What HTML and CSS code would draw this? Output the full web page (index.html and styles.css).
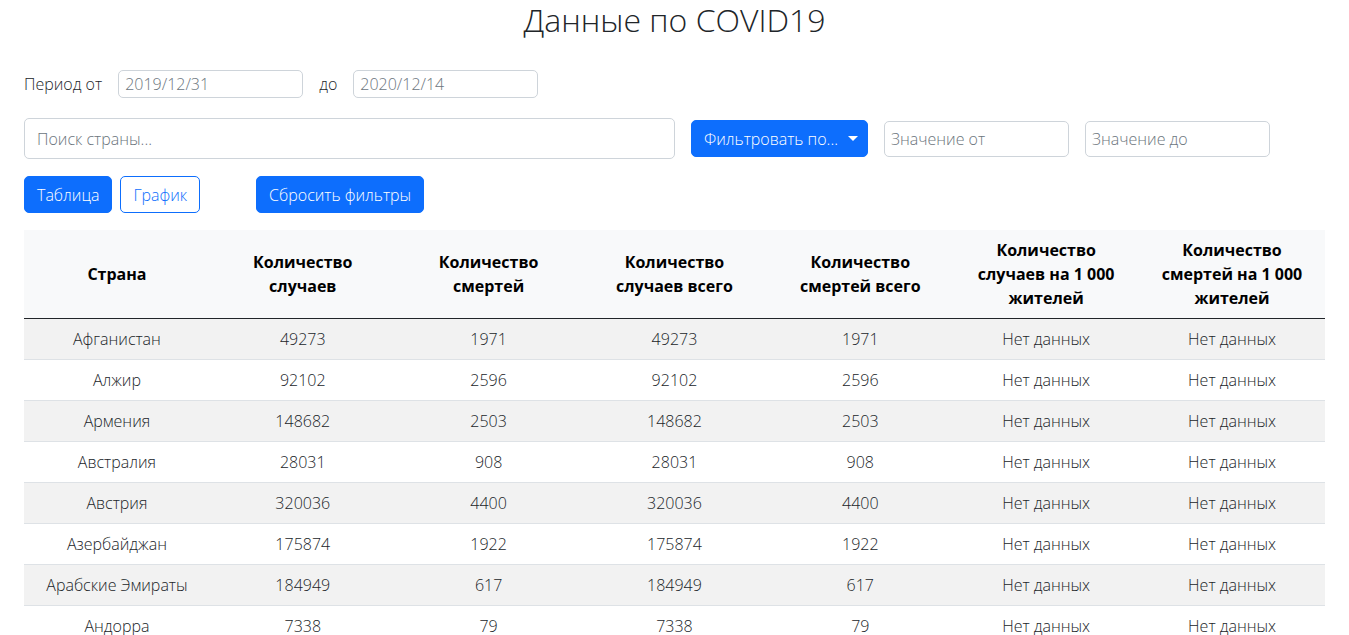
FILE: index.html
```html
<!DOCTYPE html>
<html lang="ru">
<head>
<meta charset="utf-8">
<title>Данные по COVID19</title>
<link rel="stylesheet" href="styles.css">
</head>
<body>
<div class="page">
  <h1 class="title">Данные по COVID19</h1>
  <div class="period">
    <span class="label">Период от</span>
    <input class="input input-sm" type="text" placeholder="2019/12/31">
    <span class="label">до</span>
    <input class="input input-sm" type="text" placeholder="2020/12/14">
  </div>
  <div class="filters">
    <input class="input input-lg search" type="text" placeholder="Поиск страны...">
    <button class="btn btn-primary dropdown">Фильтровать по...<span class="caret"></span></button>
    <input class="input input-md value" type="text" placeholder="Значение от">
    <input class="input input-md value" type="text" placeholder="Значение до">
  </div>
  <div class="actions">
    <button class="btn btn-primary">Таблица</button>
    <button class="btn btn-outline">График</button>
    <button class="btn btn-primary reset">Сбросить фильтры</button>
  </div>
  <table class="data">
    <thead>
      <tr>
        <th>Страна</th>
        <th>Количество случаев</th>
        <th>Количество смертей</th>
        <th>Количество случаев всего</th>
        <th>Количество смертей всего</th>
        <th>Количество случаев на 1&nbsp;000 жителей</th>
        <th>Количество смертей на 1&nbsp;000 жителей</th>
      </tr>
    </thead>
    <tbody>
      <tr><td>Афганистан</td><td>49273</td><td>1971</td><td>49273</td><td>1971</td><td>Нет данных</td><td>Нет данных</td></tr>
      <tr><td>Алжир</td><td>92102</td><td>2596</td><td>92102</td><td>2596</td><td>Нет данных</td><td>Нет данных</td></tr>
      <tr><td>Армения</td><td>148682</td><td>2503</td><td>148682</td><td>2503</td><td>Нет данных</td><td>Нет данных</td></tr>
      <tr><td>Австралия</td><td>28031</td><td>908</td><td>28031</td><td>908</td><td>Нет данных</td><td>Нет данных</td></tr>
      <tr><td>Австрия</td><td>320036</td><td>4400</td><td>320036</td><td>4400</td><td>Нет данных</td><td>Нет данных</td></tr>
      <tr><td>Азербайджан</td><td>175874</td><td>1922</td><td>175874</td><td>1922</td><td>Нет данных</td><td>Нет данных</td></tr>
      <tr><td>Арабские Эмираты</td><td>184949</td><td>617</td><td>184949</td><td>617</td><td>Нет данных</td><td>Нет данных</td></tr>
      <tr><td>Андорра</td><td>7338</td><td>79</td><td>7338</td><td>79</td><td>Нет данных</td><td>Нет данных</td></tr>
    </tbody>
  </table>
</div>
</body>
</html>
```
FILE: styles.css
```css
* { box-sizing: border-box; }
body {
  margin: 0;
  font-family: "Open Sans", "Liberation Sans", sans-serif;
  font-weight: 300;
  font-size: 16px;
  line-height: 24px;
  color: #212529;
  background: #fff;
}
.page { padding: 0 24px; }
.title {
  margin: 0;
  padding-top: 0;
  text-align: center;
  font-size: 32px;
  font-weight: 300;
  line-height: 40px;
  color: #212529;
}
.period {
  display: flex;
  align-items: center;
  gap: 16px;
  margin-top: 30px;
}
.label { font-size: 16px; }
.input {
  font-family: inherit;
  font-weight: 300;
  color: #212529;
  border: 1px solid #ced4da;
  border-radius: 5px;
  background: #fff;
  outline: none;
}
.input::placeholder { color: #6c757d; opacity: 1; }
.input-sm { width: 185px; height: 28px; padding: 0 6px; font-size: 16px; }
.input-lg { height: 41px; padding: 0 12px; font-size: 16px; }
.input-md { height: 36px; padding: 0 6px; font-size: 16px; }
.filters {
  display: flex;
  align-items: center;
  gap: 16px;
  margin-top: 20px;
}
.search { width: 651px; }
.value { width: 185px; }
.btn {
  font-family: inherit;
  font-weight: 300;
  font-size: 16px;
  line-height: 24px;
  height: 37px;
  padding: 0 12px;
  border-radius: 5px;
  border: 1px solid #0d6efd;
  cursor: pointer;
  white-space: nowrap;
}
.btn-primary { background: #0d6efd; color: #fff; }
.btn-outline { background: #fff; color: #0d6efd; }
.dropdown { width: 177px; display: flex; align-items: center; }
.caret {
  display: inline-block;
  margin-left: 10px;
  border-top: 5px solid #fff;
  border-left: 5px solid transparent;
  border-right: 5px solid transparent;
}
.actions {
  display: flex;
  gap: 8px;
  margin-top: 17px;
}
.reset { margin-left: 48px; }
.data {
  width: 100%;
  margin-top: 17px;
  border-collapse: collapse;
  table-layout: fixed;
}
.data th, .data td {
  padding: 8px;
  text-align: center;
  vertical-align: middle;
}
.data thead tr { background: #f8f9fa; }
.data th {
  font-weight: 700;
  color: #000;
  border-bottom: 1px solid #212529;
}
.data td { border-bottom: 1px solid #dee2e6; }
.data tbody tr:nth-child(odd) { background: #f2f2f2; }
```
